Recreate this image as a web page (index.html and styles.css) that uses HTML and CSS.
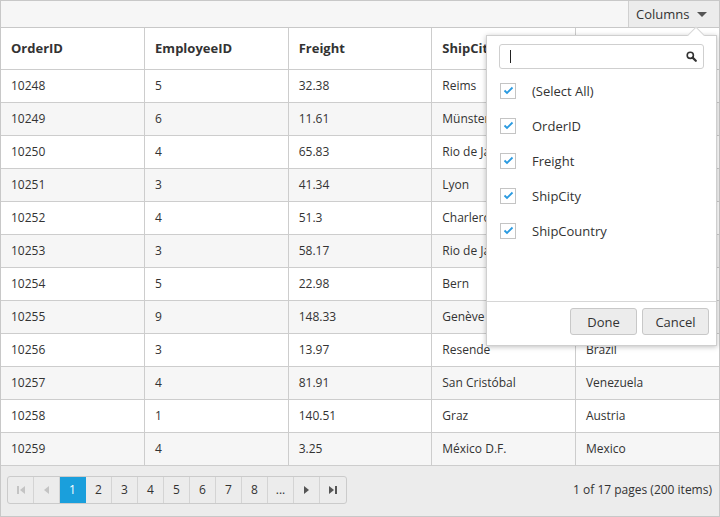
FILE: index.html
```html
<!DOCTYPE html>
<html>
<head>
<meta charset="utf-8">
<link rel="stylesheet" href="styles.css">
</head>
<body>
<div class="grid">
  <div class="toolbar">
    <button class="colbtn">Columns <span class="caret"></span></button>
  </div>
  <table class="data">
    <thead>
      <tr><th>OrderID</th><th>EmployeeID</th><th>Freight</th><th>ShipCity</th><th>ShipCountry</th></tr>
    </thead>
    <tbody>
      <tr><td>10248</td><td>5</td><td>32.38</td><td>Reims</td><td>France</td></tr>
      <tr class="alt"><td>10249</td><td>6</td><td>11.61</td><td>Münster</td><td>Germany</td></tr>
      <tr><td>10250</td><td>4</td><td>65.83</td><td>Rio de Janeiro</td><td>Brazil</td></tr>
      <tr class="alt"><td>10251</td><td>3</td><td>41.34</td><td>Lyon</td><td>France</td></tr>
      <tr><td>10252</td><td>4</td><td>51.3</td><td>Charleroi</td><td>Belgium</td></tr>
      <tr class="alt"><td>10253</td><td>3</td><td>58.17</td><td>Rio de Janeiro</td><td>Brazil</td></tr>
      <tr><td>10254</td><td>5</td><td>22.98</td><td>Bern</td><td>Switzerland</td></tr>
      <tr class="alt"><td>10255</td><td>9</td><td>148.33</td><td>Genève</td><td>Switzerland</td></tr>
      <tr><td>10256</td><td>3</td><td>13.97</td><td>Resende</td><td>Brazil</td></tr>
      <tr class="alt"><td>10257</td><td>4</td><td>81.91</td><td>San Cristóbal</td><td>Venezuela</td></tr>
      <tr><td>10258</td><td>1</td><td>140.51</td><td>Graz</td><td>Austria</td></tr>
      <tr class="alt"><td>10259</td><td>4</td><td>3.25</td><td>México D.F.</td><td>Mexico</td></tr>
    </tbody>
  </table>
  <div class="pager">
    <div class="pages">
      <span class="pg dis"><svg width="8" height="8" viewBox="0 0 8 8"><rect x="0" y="0" width="2" height="8" fill="currentColor"/><path d="M8 0 L3 4 L8 8 Z" fill="currentColor"/></svg></span>
      <span class="pg dis"><svg width="5" height="8" viewBox="0 0 5 8"><path d="M5 0 L0 4 L5 8 Z" fill="currentColor"/></svg></span>
      <span class="pg cur">1</span>
      <span class="pg">2</span>
      <span class="pg">3</span>
      <span class="pg">4</span>
      <span class="pg">5</span>
      <span class="pg">6</span>
      <span class="pg">7</span>
      <span class="pg">8</span>
      <span class="pg">...</span>
      <span class="pg nav"><svg width="5" height="8" viewBox="0 0 5 8"><path d="M0 0 L5 4 L0 8 Z" fill="currentColor"/></svg></span>
      <span class="pg nav"><svg width="8" height="8" viewBox="0 0 8 8"><path d="M0 0 L5 4 L0 8 Z" fill="currentColor"/><rect x="6" y="0" width="2" height="8" fill="currentColor"/></svg></span>
    </div>
    <div class="info">1 of 17 pages (200 items)</div>
  </div>

  <div class="popup">
    <div class="search">
      <span class="cursor"></span>
      <svg class="mag" width="11" height="11" viewBox="0 0 11 11"><circle cx="4.3" cy="4.3" r="3.1" fill="none" stroke="#333" stroke-width="1.6"/><path d="M6.6 6.6 L9.8 9.8" stroke="#333" stroke-width="2.2" stroke-linecap="round"/></svg>
    </div>
    <ul class="items">
      <li><span class="cb"><svg width="11" height="9" viewBox="0 0 11 9"><path d="M1.5 4.5 L4 7 L9.5 1.5" fill="none" stroke="#2a9ae0" stroke-width="1.8"/></svg></span>(Select All)</li>
      <li><span class="cb"><svg width="11" height="9" viewBox="0 0 11 9"><path d="M1.5 4.5 L4 7 L9.5 1.5" fill="none" stroke="#2a9ae0" stroke-width="1.8"/></svg></span>OrderID</li>
      <li><span class="cb"><svg width="11" height="9" viewBox="0 0 11 9"><path d="M1.5 4.5 L4 7 L9.5 1.5" fill="none" stroke="#2a9ae0" stroke-width="1.8"/></svg></span>Freight</li>
      <li><span class="cb"><svg width="11" height="9" viewBox="0 0 11 9"><path d="M1.5 4.5 L4 7 L9.5 1.5" fill="none" stroke="#2a9ae0" stroke-width="1.8"/></svg></span>ShipCity</li>
      <li><span class="cb"><svg width="11" height="9" viewBox="0 0 11 9"><path d="M1.5 4.5 L4 7 L9.5 1.5" fill="none" stroke="#2a9ae0" stroke-width="1.8"/></svg></span>ShipCountry</li>
    </ul>
    <div class="foot">
      <button class="btn">Done</button>
      <button class="btn">Cancel</button>
    </div>
  </div>
</div>
</body>
</html>
```

FILE: styles.css
```css
* { box-sizing: border-box; }
html, body { margin: 0; padding: 0; background: #fff; }
body {
  font-family: "Open Sans", "Noto Sans", sans-serif;
  font-size: 12px;
  color: #333;
}
.grid {
  position: relative;
  width: 720px;
  height: 517px;
  border: 1px solid #c8c8c8;
  display: flex;
  flex-direction: column;
}
.toolbar {
  height: 27px;
  background: #f6f6f6;
  border-bottom: 1px solid #c8c8c8;
  display: flex;
  justify-content: flex-end;
}
.colbtn {
  height: 26px;
  width: 91px;
  border: none;
  border-left: 1px solid #d0d0d0;
  background: #ececec;
  font-family: inherit;
  font-size: 13px;
  color: #333;
  padding: 0 0 0 7px;
  text-align: left;
  display: flex;
  align-items: center;
  gap: 8px;
}
.caret {
  width: 0; height: 0;
  border-left: 5px solid transparent;
  border-right: 5px solid transparent;
  border-top: 5px solid #555;
  margin-top: 1px;
}
.data {
  width: 718px;
  border-collapse: collapse;
  table-layout: fixed;
}
.data th, .data td {
  border-right: 1px solid #cdcdcd;
  border-bottom: 1px solid #cdcdcd;
  text-align: left;
  padding: 0 10px;
  white-space: nowrap;
  overflow: hidden;
}
.data th:last-child, .data td:last-child { border-right: none; }
.data th {
  height: 41px;
  font-size: 13px;
  font-weight: 700;
  color: #333;
  background: #fff;
}
.data td {
  height: 33px;
  font-size: 12px;
  color: #333;
}
.data tr.alt td { background: #f6f6f6; }
.pager {
  flex: 1;
  background: #ececec;
  display: flex;
  align-items: center;
  justify-content: space-between;
  padding: 0 7px 2px 6px;
}
.pages {
  display: flex;
  border: 1px solid #cbcbcb;
  border-radius: 3px;
  overflow: hidden;
  height: 28px;
  background: #ececec;
}
.pg {
  width: 26px;
  display: flex;
  align-items: center;
  justify-content: center;
  border-right: 1px solid #d4d4d4;
  font-size: 12px;
  color: #333;
}
.pg:last-child { border-right: none; }
.pg.dis { color: #c4c4c4; }
.pg.nav { color: #555; }
.pg.cur { background: #1a9fdc; color: #fff; border-right-color: #1a9fdc; }
.info { font-size: 12px; color: #333; }

.popup {
  position: absolute;
  left: 485px;
  top: 34px;
  width: 231px;
  height: 311px;
  background: #fff;
  border: 1px solid #cfcfcf;
  box-shadow: 0 1px 5px rgba(0,0,0,0.25);
  display: flex;
  flex-direction: column;
}
.popup::before {
  content: "";
  position: absolute;
  top: -7px;
  right: 14px;
  width: 11px;
  height: 11px;
  background: #fff;
  border-left: 1px solid #d6d6d6;
  border-top: 1px solid #d6d6d6;
  transform: rotate(45deg);
}
.search {
  position: relative;
  margin: 8px 12px 0 12px;
  height: 25px;
  border: 1px solid #cfcfcf;
  border-radius: 3px;
  display: flex;
  align-items: center;
  justify-content: space-between;
  padding: 0 6px 0 10px;
}
.cursor { width: 1px; height: 13px; background: #222; }
.items {
  list-style: none;
  margin: 4px 0 0 0;
  padding: 0;
  flex: 1;
}
.items li {
  height: 35px;
  display: flex;
  align-items: center;
  padding-left: 13px;
  font-size: 13px;
  color: #333;
}
.cb {
  width: 16px;
  height: 16px;
  border: 1px solid #c4c4c4;
  display: flex;
  align-items: center;
  justify-content: center;
  margin-right: 16px;
}
.foot {
  height: 44px;
  border-top: 1px solid #d6d6d6;
  display: flex;
  justify-content: flex-end;
  align-items: center;
  gap: 5px;
  padding: 0 7px 4px 0;
}
.btn {
  height: 27px;
  padding: 0 12px;
  min-width: 67px;
  border: 1px solid #c8c8c8;
  border-radius: 3px;
  background: #ececec;
  font-family: inherit;
  font-size: 13px;
  color: #333;
}
```
